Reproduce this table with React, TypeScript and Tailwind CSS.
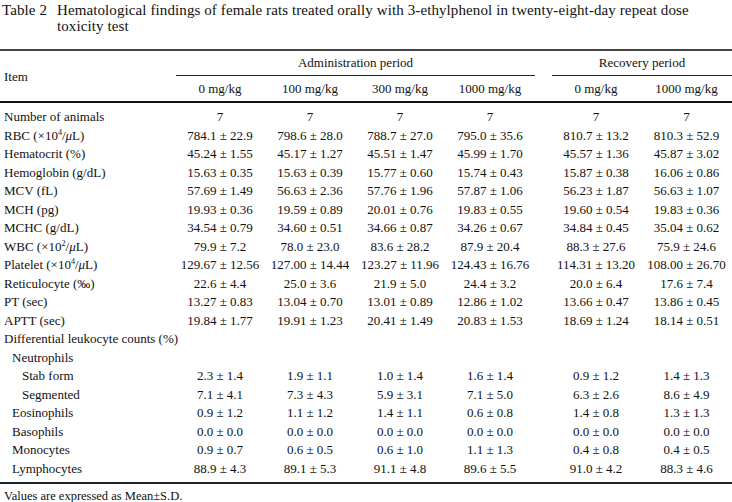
import React from 'react';

type Row = { label: React.ReactNode; indent?: number; values?: string[] };

const Sup = ({ children }: { children: React.ReactNode }) => (
  <sup className="text-[8px] relative -top-[5px]">{children}</sup>
);

const Mu = () => <span className="italic">μ</span>;

const rows: Row[] = [
  { label: 'Number of animals', values: ['7', '7', '7', '7', '7', '7'] },
  {
    label: (
      <>
        RBC (×10<Sup>4</Sup>/<Mu />L)
      </>
    ),
    values: ['784.1 ± 22.9', '798.6 ± 28.0', '788.7 ± 27.0', '795.0 ± 35.6', '810.7 ± 13.2', '810.3 ± 52.9'],
  },
  { label: 'Hematocrit (%)', values: ['45.24 ± 1.55', '45.17 ± 1.27', '45.51 ± 1.47', '45.99 ± 1.70', '45.57 ± 1.36', '45.87 ± 3.02'] },
  { label: 'Hemoglobin (g/dL)', values: ['15.63 ± 0.35', '15.63 ± 0.39', '15.77 ± 0.60', '15.74 ± 0.43', '15.87 ± 0.38', '16.06 ± 0.86'] },
  { label: 'MCV (fL)', values: ['57.69 ± 1.49', '56.63 ± 2.36', '57.76 ± 1.96', '57.87 ± 1.06', '56.23 ± 1.87', '56.63 ± 1.07'] },
  { label: 'MCH (pg)', values: ['19.93 ± 0.36', '19.59 ± 0.89', '20.01 ± 0.76', '19.83 ± 0.55', '19.60 ± 0.54', '19.83 ± 0.36'] },
  { label: 'MCHC (g/dL)', values: ['34.54 ± 0.79', '34.60 ± 0.51', '34.66 ± 0.87', '34.26 ± 0.67', '34.84 ± 0.45', '35.04 ± 0.62'] },
  {
    label: (
      <>
        WBC (×10<Sup>2</Sup>/<Mu />L)
      </>
    ),
    values: ['79.9 ± 7.2', '78.0 ± 23.0', '83.6 ± 28.2', '87.9 ± 20.4', '88.3 ± 27.6', '75.9 ± 24.6'],
  },
  {
    label: (
      <>
        Platelet (×10<Sup>4</Sup>/<Mu />L)
      </>
    ),
    values: ['129.67 ± 12.56', '127.00 ± 14.44', '123.27 ± 11.96', '124.43 ± 16.76', '114.31 ± 13.20', '108.00 ± 26.70'],
  },
  { label: 'Reticulocyte (‰)', values: ['22.6 ± 4.4', '25.0 ± 3.6', '21.9 ± 5.0', '24.4 ± 3.2', '20.0 ± 6.4', '17.6 ± 7.4'] },
  { label: 'PT (sec)', values: ['13.27 ± 0.83', '13.04 ± 0.70', '13.01 ± 0.89', '12.86 ± 1.02', '13.66 ± 0.47', '13.86 ± 0.45'] },
  { label: 'APTT (sec)', values: ['19.84 ± 1.77', '19.91 ± 1.23', '20.41 ± 1.49', '20.83 ± 1.53', '18.69 ± 1.24', '18.14 ± 0.51'] },
  { label: 'Differential leukocyte counts (%)' },
  { label: 'Neutrophils', indent: 1 },
  { label: 'Stab form', indent: 2, values: ['2.3 ± 1.4', '1.9 ± 1.1', '1.0 ± 1.4', '1.6 ± 1.4', '0.9 ± 1.2', '1.4 ± 1.3'] },
  { label: 'Segmented', indent: 2, values: ['7.1 ± 4.1', '7.3 ± 4.3', '5.9 ± 3.1', '7.1 ± 5.0', '6.3 ± 2.6', '8.6 ± 4.9'] },
  { label: 'Eosinophils', indent: 1, values: ['0.9 ± 1.2', '1.1 ± 1.2', '1.4 ± 1.1', '0.6 ± 0.8', '1.4 ± 0.8', '1.3 ± 1.3'] },
  { label: 'Basophils', indent: 1, values: ['0.0 ± 0.0', '0.0 ± 0.0', '0.0 ± 0.0', '0.0 ± 0.0', '0.0 ± 0.0', '0.0 ± 0.0'] },
  { label: 'Monocytes', indent: 1, values: ['0.9 ± 0.7', '0.6 ± 0.5', '0.6 ± 1.0', '1.1 ± 1.3', '0.4 ± 0.8', '0.4 ± 0.5'] },
  { label: 'Lymphocytes', indent: 1, values: ['88.9 ± 4.3', '89.1 ± 5.3', '91.1 ± 4.8', '89.6 ± 5.5', '91.0 ± 4.2', '88.3 ± 4.6'] },
];

const cols = 'grid grid-cols-[175px_90px_90px_90px_90px_16px_90px_91px]';

export default function App() {
  return (
    <div className="w-[732px] h-[502px] bg-white text-[#111] font-['Liberation_Serif',serif] text-[13px] overflow-hidden">
      {/* caption */}
      <div className="flex pl-[2px] pt-[2px] leading-[16px] text-[15px] tracking-[0.1px]">
        <span className="w-[55px] shrink-0">Table 2</span>
        <span className="w-[650px]">
          Hematological findings of female rats treated orally with 3-ethylphenol in twenty-eight-day repeat dose toxicity test
        </span>
      </div>

      <div className="mt-[15px] border-t-2 border-[#444]">
        {/* header */}
        <div className={cols}>
          <div className="row-span-2 flex items-center pl-[4px] pt-[2px]">Item</div>
          <div className="col-span-4 h-[25px] flex items-center justify-center border-b border-[#222] ml-[1px]">
            Administration period
          </div>
          <div />
          <div className="col-span-2 h-[25px] flex items-center justify-center border-b border-[#222] ml-[1px]">
            Recovery period
          </div>
          <div className="h-[25px] flex items-center justify-center">0 mg/kg</div>
          <div className="h-[25px] flex items-center justify-center">100 mg/kg</div>
          <div className="h-[25px] flex items-center justify-center">300 mg/kg</div>
          <div className="h-[25px] flex items-center justify-center">1000 mg/kg</div>
          <div />
          <div className="h-[25px] flex items-center justify-center">0 mg/kg</div>
          <div className="h-[25px] flex items-center justify-center">1000 mg/kg</div>
        </div>

        {/* body */}
        <div className="border-t-2 border-[#111] pt-[4px] pb-[5px]">
          {rows.map((r, i) => (
            <div key={i} className={`${cols} h-[18.5px] items-center`}>
              <div
                className={
                  'whitespace-nowrap ' +
                  (r.indent === 2 ? 'pl-[22px]' : r.indent === 1 ? 'pl-[12px]' : 'pl-[4px]')
                }
              >
                {r.label}
              </div>
              {r.values ? (
                <>
                  {r.values.slice(0, 4).map((v, j) => (
                    <div key={j} className="text-center whitespace-nowrap">
                      {v}
                    </div>
                  ))}
                  <div />
                  {r.values.slice(4).map((v, j) => (
                    <div key={j} className="text-center whitespace-nowrap">
                      {v}
                    </div>
                  ))}
                </>
              ) : null}
            </div>
          ))}
        </div>

        <div className="border-t-2 border-[#222] pt-[3px] pl-[4px] text-[12.5px]">
          Values are expressed as Mean±S.D.
        </div>
      </div>
    </div>
  );
}
